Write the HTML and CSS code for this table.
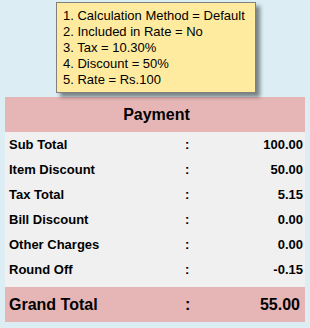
FILE: index.html
```html
<!DOCTYPE html>
<html>
<head>
<meta charset="utf-8">
<link rel="stylesheet" href="styles.css">
</head>
<body>
<div class="page">
  <div class="tip">
    <div>1. Calculation Method = Default</div>
    <div>2. Included in Rate = No</div>
    <div>3. Tax = 10.30%</div>
    <div>4. Discount = 50%</div>
    <div>5. Rate = Rs.100</div>
  </div>
  <div class="card">
    <div class="head">Payment</div>
    <div class="rows">
      <div class="row"><span class="lbl">Sub Total</span><span class="col">:</span><span class="val">100.00</span></div>
      <div class="row"><span class="lbl">Item Discount</span><span class="col">:</span><span class="val">50.00</span></div>
      <div class="row"><span class="lbl">Tax Total</span><span class="col">:</span><span class="val">5.15</span></div>
      <div class="row"><span class="lbl">Bill Discount</span><span class="col">:</span><span class="val">0.00</span></div>
      <div class="row"><span class="lbl">Other Charges</span><span class="col">:</span><span class="val">0.00</span></div>
      <div class="row"><span class="lbl">Round Off</span><span class="col">:</span><span class="val">-0.15</span></div>
    </div>
    <div class="row grand"><span class="lbl">Grand Total</span><span class="col">:</span><span class="val">55.00</span></div>
  </div>
</div>
</body>
</html>
```
FILE: styles.css
```css
html, body {
  margin: 0;
  padding: 0;
  background: #dcedf4;
}
body {
  width: 310px;
  height: 328px;
  overflow: hidden;
  font-family: "Liberation Sans", Arial, sans-serif;
  color: #000;
}
.page {
  padding: 2px 5px 0 5px;
}
.tip {
  margin-left: 51px;
  width: 186px;
  height: 79px;
  padding: 5px 6px;
  border: 1px solid #7f7f7f;
  background: #ffeb9f;
  font-size: 13px;
  line-height: 16px;
  box-shadow: 4px 4px 4px rgba(0, 0, 0, 0.45);
  position: relative;
  z-index: 1;
}
.card {
  margin-top: 4px;
  width: 300px;
  background: #f0f0f0;
}
.head {
  height: 35px;
  background: #e6b6b6;
  font-weight: bold;
  font-size: 16px;
  line-height: 35px;
  text-align: center;
  padding-left: 3px;
}
.rows {
  padding-bottom: 5px;
}
.row {
  display: grid;
  grid-template-columns: 176px 10px 1fr;
  height: 25px;
  line-height: 25px;
  font-size: 13px;
  font-weight: bold;
  padding: 0 2px 0 4px;
}
.val {
  text-align: right;
}
.grand {
  height: 35px;
  line-height: 35px;
  font-size: 16px;
  background: #e6b6b6;
  padding-right: 5px;
}
```
